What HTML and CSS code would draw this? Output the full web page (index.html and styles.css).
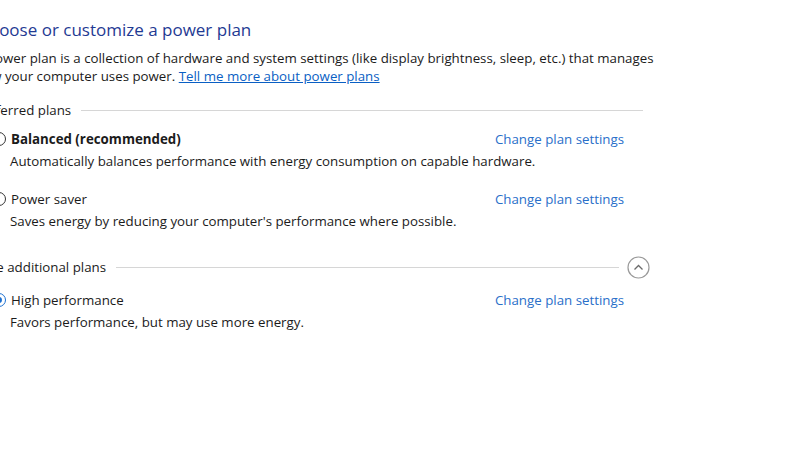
FILE: index.html
```
<!DOCTYPE html>
<html lang="en">
<head>
  <meta charset="UTF-8">
  <title>Power Options</title>
  <link rel="stylesheet" href="styles.css">
</head>
<body>
<div class="panel">
  <h1>Choose or customize a power plan</h1>
  <p class="intro">A power plan is a collection of hardware and system settings (like display brightness, sleep, etc.) that manages
    how your computer uses power. <a href="#" class="more">Tell me more about power plans</a></p>

  <div class="groupHead first">
    <span>Preferred plans</span>
    <div class="rule"></div>
  </div>

  <div class="plan">
    <div class="planRow">
      <span class="radio"></span>
      <span class="planName bold">Balanced (recommended)</span>
      <a href="#" class="change">Change plan settings</a>
    </div>
    <div class="planDesc">Automatically balances performance with energy consumption on capable hardware.</div>
  </div>

  <div class="plan">
    <div class="planRow">
      <span class="radio"></span>
      <span class="planName">Power saver</span>
      <a href="#" class="change">Change plan settings</a>
    </div>
    <div class="planDesc">Saves energy by reducing your computer's performance where possible.</div>
  </div>

  <div class="groupHead extra">
    <span>Hide additional plans</span>
    <div class="rule"></div>
    <span class="toggle">
      <svg width="23" height="23" viewBox="0 0 23 23">
        <circle cx="11.5" cy="11.5" r="10.5" fill="none" stroke="#9a9a9a" stroke-width="1.2"/>
        <path d="M7.5 13.5 L11.5 9.5 L15.5 13.5" fill="none" stroke="#6a6a6a" stroke-width="1.3"/>
      </svg>
    </span>
  </div>

  <div class="plan">
    <div class="planRow">
      <span class="radio checked"></span>
      <span class="planName">High performance</span>
      <a href="#" class="change">Change plan settings</a>
    </div>
    <div class="planDesc">Favors performance, but may use more energy.</div>
  </div>
</div>
</body>
</html>
```

FILE: styles.css
```
html {
  --title: #1f3a93;
  --link: #0a5fc4;
  --change: #2a6fc9;
  --text: #1b1b1b;
  --line: #d6d6d6;
  --font: "Open Sans", "Noto Sans", sans-serif;
}

body {
  margin: 0;
  background: #fff;
  font-family: var(--font);
  font-size: 13.3px;
  color: var(--text);
  overflow: hidden;
}

.panel {
  width: 675px;
  margin-left: -25px;
  padding-top: 16px;
}

h1 {
  margin: 0 0 0 3px;
  font-size: 17px;
  font-weight: normal;
  color: var(--title);
  line-height: 28px;
}

.intro {
  margin: 5px 0 0 0;
  line-height: 18px;
  width: 690px;
}

.more {
  color: var(--link);
}

.groupHead {
  display: flex;
  align-items: center;
  gap: 10px;
  height: 24px;
  margin-top: 13px;
}

.groupHead.first {
  margin-right: 7px;
}

.groupHead.extra {
  margin-top: 24px;
}

.rule {
  flex: 1;
  height: 1px;
  background: var(--line);
}

.toggle {
  display: flex;
  margin-left: -2px;
}

.plan {
  padding-left: 17px;
  margin-top: 5px;
}

.plan + .plan {
  margin-top: 16px;
}

.extra + .plan {
  margin-top: 9px;
}

.planRow {
  display: flex;
  align-items: center;
  height: 24px;
}

.radio {
  width: 12px;
  height: 12px;
  border: 1px solid #333;
  border-radius: 50%;
  margin-right: 5px;
  box-sizing: content-box;
  position: relative;
}

.radio.checked {
  border-color: #1a6fd1;
}

.radio.checked::after {
  content: "";
  position: absolute;
  left: 3px;
  top: 3px;
  width: 6px;
  height: 6px;
  border-radius: 50%;
  background: #1a6fd1;
}

.bold {
  font-weight: bold;
}

.change {
  margin-left: auto;
  margin-right: 26px;
  color: var(--change);
  text-decoration: none;
}

.planDesc {
  padding-left: 18px;
  line-height: 20px;
}
```
